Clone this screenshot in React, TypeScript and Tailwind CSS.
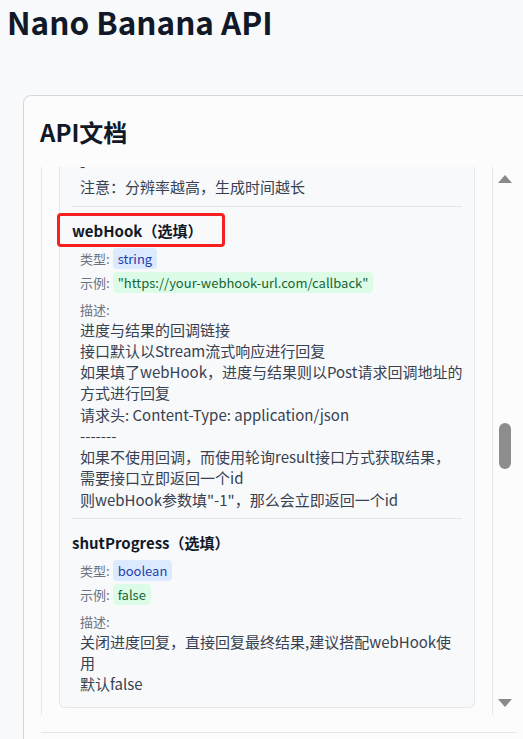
import React from "react";

const FONT = "font-['Noto_Sans_CJK_SC','Noto_Sans',sans-serif]";

type Tone = "blue" | "green";

function Field({ label, value, tone, first }: { label: string; value: string; tone: Tone; first?: boolean }) {
  const toneCls =
    tone === "blue" ? "bg-[#dbeafe] text-[#1e40af]" : "bg-[#dcfce7] text-[#166534]";
  return (
    <div className={`flex items-center gap-[3px] h-[21px] ${first ? "mt-[5px]" : "mt-[3px]"}`}>
      <span className="text-[13px] leading-[21px] text-[#6b7280]">{label}</span>
      <span className={`rounded-[4px] px-[5px] text-[13px] leading-[21px] ${toneCls}`}>{value}</span>
    </div>
  );
}

function Lines({ lines }: { lines: string[] }) {
  return (
    <div className="text-[15px] leading-[21.25px] text-[#374151]">
      {lines.map((l, i) => (
        <div key={i} className="whitespace-nowrap">
          {l}
        </div>
      ))}
    </div>
  );
}

function Param({
  name,
  type,
  example,
  desc,
  highlight,
  last,
}: {
  name: string;
  type: string;
  example: string;
  desc: string[];
  highlight?: boolean;
  last?: boolean;
}) {
  return (
    <div className={`mx-[12px] pt-[12px] ${last ? "pb-[12px]" : "pb-[8px] border-b border-[#e5e7eb]"}`}>
      <div className="relative">
        <div className="text-[15px] leading-[24px] font-bold text-[#111827]">{name}</div>
        {highlight && (
          <div className="absolute left-[-15px] top-[-6px] w-[168px] h-[34px] rounded-[4px] border-[3px] border-[#f5201f]" />
        )}
      </div>
      <div className="pl-[8px]">
        <Field label="类型:" value={type} tone="blue" first />
        <Field label="示例:" value={example} tone="green" />
        <div className="mt-[8px] text-[13px] leading-[18px] text-[#6b7280]">描述:</div>
        <Lines lines={desc} />
      </div>
    </div>
  );
}

export default function App() {
  return (
    <div className={`w-[523px] h-[739px] overflow-hidden bg-[#f8f9fa] ${FONT}`}>
      <h1 className="pl-[7px] pt-[1px] text-[31.5px] leading-[40px] font-bold text-[#111827] whitespace-nowrap">
        Nano Banana API
      </h1>
      <div className="mt-[54px] ml-[23px] w-[560px] rounded-[8px] border border-[#d4d6db] bg-[#fcfcfd] pl-[16px] pt-[20px] pb-[20px]">
        <h2 className="text-[24px] leading-[32px] font-bold text-[#111827]">API文档</h2>
        <div className="mt-[19px] ml-[1px] w-[475px]">
          <div className="flex h-[548px]">
            <div className="w-[452px] shrink-0 overflow-hidden border-x border-[#e5e7eb] bg-[#fcfcfd]">
              <div className="mx-[17px] mt-[-12px] rounded-b-[6px] border-x border-b border-[#e5e7eb] bg-[#f8f9fb]">
                <div className="mx-[12px] pb-[8px] border-b border-[#e5e7eb]">
                  <div className="pl-[8px]">
                    <Lines lines={["-", "注意：分辨率越高，生成时间越长"]} />
                  </div>
                </div>
                <Param
                  name="webHook（选填）"
                  type="string"
                  example={'"https://your-webhook-url.com/callback"'}
                  highlight
                  desc={[
                    "进度与结果的回调链接",
                    "接口默认以Stream流式响应进行回复",
                    "如果填了webHook，进度与结果则以Post请求回调地址的",
                    "方式进行回复",
                    "请求头: Content-Type: application/json",
                    "-------",
                    "如果不使用回调，而使用轮询result接口方式获取结果，",
                    "需要接口立即返回一个id",
                    '则webHook参数填"-1"，那么会立即返回一个id',
                  ]}
                />
                <Param
                  name="shutProgress（选填）"
                  type="boolean"
                  example="false"
                  last
                  desc={["关闭进度回复，直接回复最终结果,建议搭配webHook使", "用", "默认false"]}
                />
              </div>
            </div>
            <div className="flex w-[23px] flex-col items-center py-[8px]">
              <div className="h-0 w-0 border-x-[7.5px] border-b-[8px] border-x-transparent border-b-[#8a8a8a]" />
              <div className="flex-1">
                <div className="mt-[240px] h-[46px] w-[12px] rounded-full bg-[#8d8d8d]" />
              </div>
              <div className="h-0 w-0 border-x-[7.5px] border-t-[8px] border-x-transparent border-t-[#8a8a8a]" />
            </div>
          </div>
          <div className="mt-[17px] border-t border-[#e5e7eb] h-[20px]" />
        </div>
      </div>
    </div>
  );
}
